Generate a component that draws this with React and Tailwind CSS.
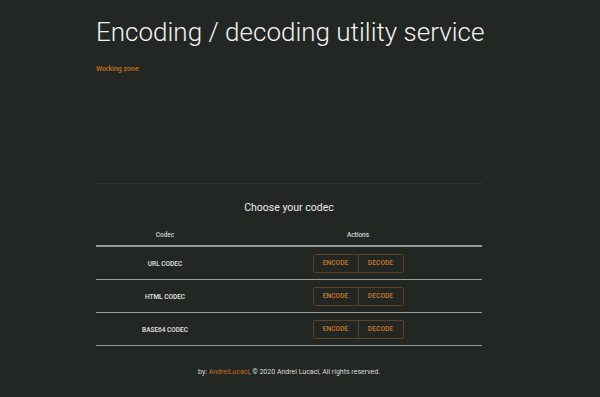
const codecs = ['URL CODEC', 'HTML CODEC', 'BASE64 CODEC']

const ActionButtons = () => (
  <div className="inline-flex h-[19px] border border-[#5e4322] rounded-[2px]">
    <button className="w-[45px] pt-[2px] text-[6.5px] font-medium tracking-[0.02em] text-[#cf7a24] border-r border-[#5e4322]">
      ENCODE
    </button>
    <button className="w-[44px] pt-[2px] text-[6.5px] font-medium tracking-[0.02em] text-[#cf7a24]">
      DECODE
    </button>
  </div>
)

export default function App() {
  return (
    <div className="w-[600px] h-[397px] bg-[#232724] text-[#e8e8e8] font-['Roboto',sans-serif] overflow-hidden">
      <div className="ml-[96px] w-[386px]">
        {/* header */}
        <h1 className="pt-[15px] text-[26px] leading-[34px] font-light text-[#f2f2f2] whitespace-nowrap">
          Encoding / decoding utility service
        </h1>
        <div className="mt-[15px] text-[7px] leading-[10px] font-medium text-[#c8701e]">
          Working zone
        </div>

        {/* working zone body */}
        <div className="h-[109px]" />
        <div className="border-t border-[#30352f]" />

        {/* codec table */}
        <h2 className="mt-[15px] text-center text-[10.5px] leading-[17px] text-[#ececec]">
          Choose your codec
        </h2>
        <div className="mt-[13px] flex h-[18px] items-start pt-[2px] text-[6.5px] font-medium text-[#d4d4d4] border-b-2 border-[#9a9c9a]">
          <div className="w-[138px] text-center">Codec</div>
          <div className="flex-1 text-center">Actions</div>
        </div>
        {codecs.map((c) => (
          <div key={c} className="flex h-[33px] items-center border-b border-[#9a9c9a]">
            <div className="w-[138px] pt-[3px] text-center text-[6.5px] font-medium text-[#e4e4e4]">{c}</div>
            <div className="flex-1 flex justify-center">
              <ActionButtons />
            </div>
          </div>
        ))}

        {/* footer */}
        <div className="mt-[21px] text-center text-[7px] text-[#dadada]">
          by: <span className="text-[#c8701e]">AndreiLucaci</span>, © 2020 Andrei Lucaci, All rights reserved.
        </div>
      </div>
    </div>
  )
}
